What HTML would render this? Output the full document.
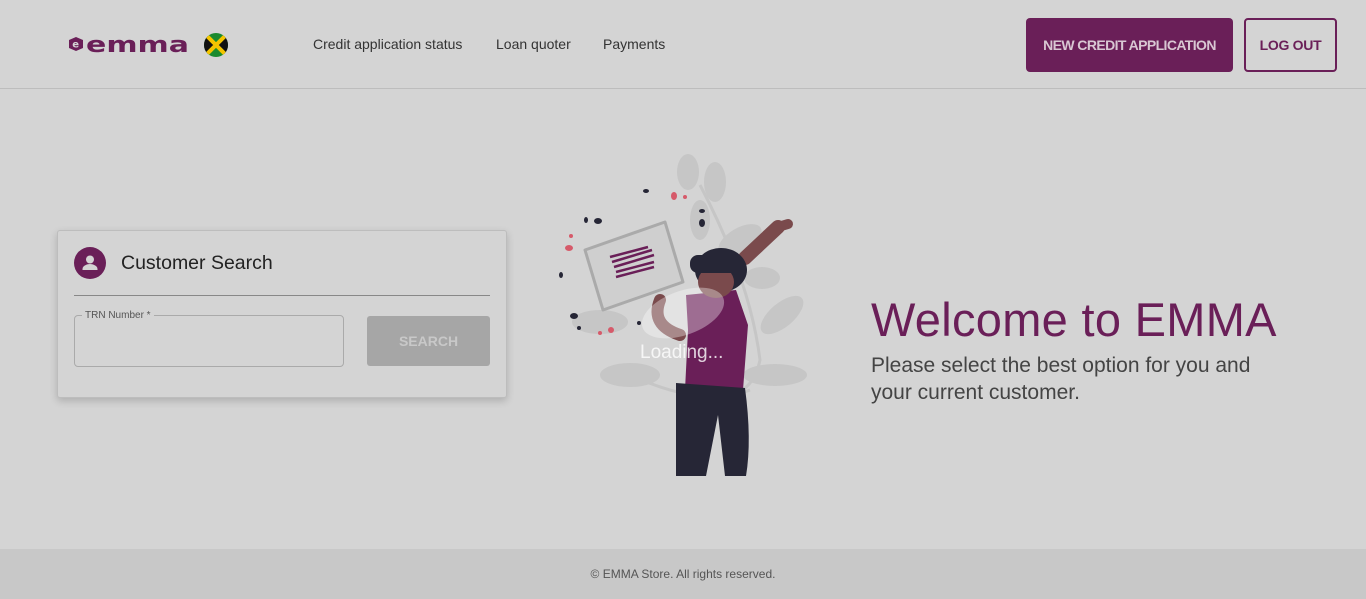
<!DOCTYPE html>
<html><head><style>
*{margin:0;padding:0;box-sizing:border-box}
body{width:1366px;height:599px;background:#d4d4d4;font-family:"Liberation Sans",Roboto,sans-serif;position:relative;overflow:hidden}
.hdr{position:absolute;left:0;top:0;width:1366px;height:89px;border-bottom:1px solid #bdbdbd}
.nav{position:absolute;top:36px;font-size:14px;color:#333}
.btn1{position:absolute;left:1026px;top:18px;width:207px;height:54px;background:#6a1f58;border-radius:4px;color:#d9c7d3;font-weight:bold;font-size:14px;text-align:center;line-height:54px;letter-spacing:-0.6px}
.btn2{position:absolute;left:1244px;top:18px;width:93px;height:54px;border:2px solid #6a1f58;border-radius:4px;color:#6a1f58;font-weight:bold;font-size:14px;text-align:center;line-height:50px;letter-spacing:-0.3px}
.card{position:absolute;left:57px;top:230px;width:450px;height:168px;background:#d4d4d4;border:1px solid #bdbdbd;border-radius:3px;box-shadow:0 3px 8px rgba(0,0,0,.18)}
.foot{position:absolute;left:0;top:549px;width:1366px;height:50px;background:#c8c8c8;text-align:center;font-size:12px;color:#555;line-height:50px}
</style></head><body>
<div class="hdr">
<svg style="position:absolute;left:68px;top:34px" width="122" height="20" viewBox="0 0 122 20">
<polygon points="8,3 15,6 15,14 8,17 1,14 1,6" fill="#6a1f58"/>
<text x="4.3" y="13.5" font-size="10" font-weight="bold" fill="#d4d4d4" font-family="DejaVu Sans">e</text>
<text x="18" y="18" font-size="22" font-weight="bold" fill="#6a1f58" font-family="DejaVu Sans" textLength="103" lengthAdjust="spacingAndGlyphs">emma</text>
</svg>
<svg style="position:absolute;left:204px;top:33px" width="24" height="24" viewBox="0 0 24 24">
<clipPath id="c"><circle cx="12" cy="12" r="12"/></clipPath>
<g clip-path="url(#c)"><rect width="24" height="24" fill="#1a8a2e"/><polygon points="0,0 12,12 0,24" fill="#111"/><polygon points="24,0 12,12 24,24" fill="#111"/><path d="M0 0L24 24M24 0L0 24" stroke="#f4c400" stroke-width="4"/></g></svg>
<div class="nav" style="left:313px">Credit application status</div>
<div class="nav" style="left:496px">Loan quoter</div>
<div class="nav" style="left:603px">Payments</div>
<div class="btn1">NEW CREDIT APPLICATION</div>
<div class="btn2">LOG OUT</div>
</div>
<div class="card">
<div style="position:absolute;left:16px;top:16px;width:32px;height:32px;border-radius:50%;background:#6a1f58">
<svg width="32" height="32" viewBox="0 0 32 32"><circle cx="16" cy="12.5" r="4" fill="#d4d4d4"/><path d="M8.5 22c0-3.5 5-5 7.5-5s7.5 1.5 7.5 5v1h-15z" fill="#d4d4d4"/></svg></div>
<div style="position:absolute;left:63px;top:21px;font-size:19.5px;color:#222">Customer Search</div>
<div style="position:absolute;left:16px;top:64px;width:416px;height:1px;background:#888"></div>
<div style="position:absolute;left:16px;top:84px;width:270px;height:52px;border:1px solid #aaa;border-radius:4px"></div>
<div style="position:absolute;left:24px;top:79px;font-size:10px;color:#555;background:#d4d4d4;padding:0 3px">TRN Number *</div>
<div style="position:absolute;left:309px;top:85px;width:123px;height:50px;background:#a6a6a6;border-radius:3px;color:#c8c8c8;font-weight:bold;font-size:14px;text-align:center;line-height:50px">SEARCH</div>
</div>
<svg style="position:absolute;left:550px;top:150px" width="280" height="330" viewBox="0 0 280 330">
<g fill="#c6c6c6">
<ellipse cx="138" cy="22" rx="11" ry="18"/><ellipse cx="165" cy="32" rx="11" ry="20"/><ellipse cx="190" cy="90" rx="24" ry="12" transform="rotate(-30 190 90)"/>
<ellipse cx="232" cy="165" rx="26" ry="12" transform="rotate(-40 232 165)"/><ellipse cx="225" cy="225" rx="32" ry="11"/><ellipse cx="80" cy="225" rx="30" ry="12"/><ellipse cx="50" cy="172" rx="28" ry="12"/><ellipse cx="212" cy="128" rx="18" ry="11"/><ellipse cx="150" cy="70" rx="10" ry="20"/>
</g>
<path d="M150 35Q200 130 210 210Q200 260 140 240M70 220Q150 260 200 240" stroke="#c6c6c6" stroke-width="3" fill="none"/>
<g fill="#262636"><ellipse cx="96" cy="41" rx="3" ry="2"/><ellipse cx="48" cy="71" rx="4" ry="3"/><ellipse cx="36" cy="70" rx="2" ry="3"/><ellipse cx="11" cy="125" rx="2" ry="3"/><ellipse cx="24" cy="166" rx="4" ry="3"/><ellipse cx="29" cy="178" rx="2" ry="2"/><ellipse cx="152" cy="61" rx="3" ry="2"/><ellipse cx="152" cy="73" rx="3" ry="4"/><ellipse cx="89" cy="173" rx="2" ry="2"/></g>
<g fill="#d65a6a"><ellipse cx="124" cy="46" rx="3" ry="4"/><ellipse cx="135" cy="47" rx="2" ry="2"/><ellipse cx="19" cy="98" rx="4" ry="3"/><ellipse cx="21" cy="86" rx="2" ry="2"/><ellipse cx="61" cy="180" rx="3" ry="3"/><ellipse cx="50" cy="183" rx="2" ry="2"/></g>
<polygon points="35,100 115,72 133,132 53,160" fill="#cfcfcf" stroke="#aaa" stroke-width="3" stroke-linejoin="round"/>
<path d="M60 107l38-10M62 112l40-12M64 117l40-12M66 122l38-10M66 127l38-10" stroke="#6a1f58" stroke-width="2.5"/>
<path d="M195 108L228 77" stroke="#7a4a4c" stroke-width="14" stroke-linecap="round"/>
<path d="M228 77l10-3" stroke="#7a4a4c" stroke-width="10" stroke-linecap="round"/>
<path d="M110 150Q100 175 130 185" stroke="#7a4a4c" stroke-width="12" fill="none" stroke-linecap="round"/>
<path d="M136 145L186 140L198 175L193 240L135 240L138 180Z" fill="#6a1f58"/>
<path d="M126 233L195 238Q202 290 196 326L175 326L168 265L156 326L126 326Z" fill="#262636"/>
<ellipse cx="171" cy="120" rx="26" ry="22" fill="#262636"/>
<ellipse cx="166" cy="132" rx="18" ry="16" fill="#7a4a4c"/>
<rect x="140" y="105" width="52" height="18" rx="8" fill="#262636"/>
<ellipse cx="133" cy="163" rx="43" ry="22" fill="#fff" opacity=".35" transform="rotate(-20 133 163)"/>
<text x="90" y="208" font-size="19" fill="#fff" opacity=".8" font-family="Liberation Sans">Loading...</text>
</svg>
<div style="position:absolute;left:871px;top:292px;font-size:47px;color:#6a1f58;letter-spacing:0.3px">Welcome to EMMA</div>
<div style="position:absolute;left:871px;top:352px;font-size:21px;color:#444;line-height:27px;width:415px">Please select the best option for you and your current customer.</div>
<div class="foot">© EMMA Store. All rights reserved.</div>
</body></html>
